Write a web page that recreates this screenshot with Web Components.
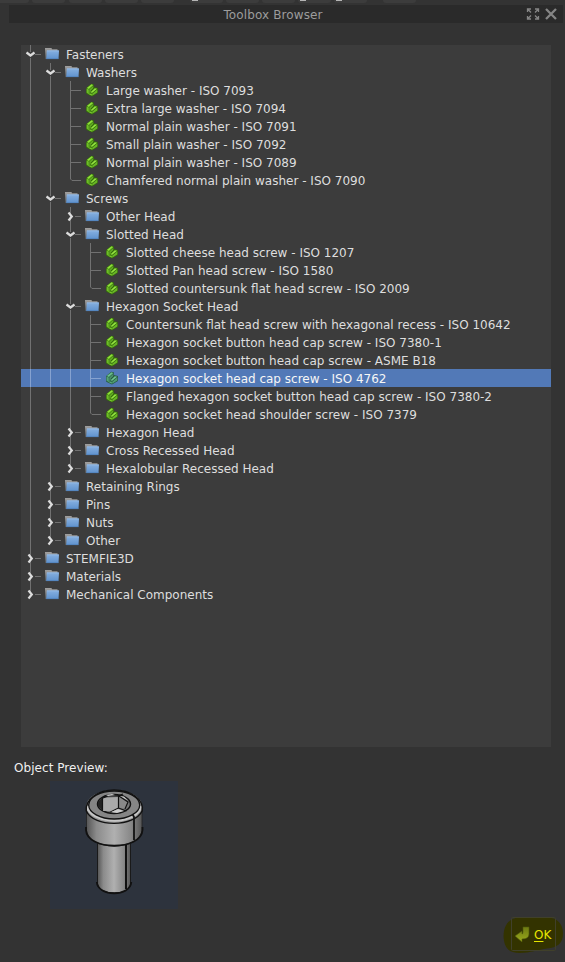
<!DOCTYPE html>
<html lang="en"><head><meta charset="utf-8"><title>Toolbox Browser</title>
<style>html,body{margin:0;background:#333}body{width:565px;height:962px;overflow:hidden}</style></head>
<body>
<toolbox-dialog></toolbox-dialog>
<script>
const mk=(name,html,init)=>{
  const t=document.createElement('template');t.innerHTML=html;
  customElements.define(name,class extends HTMLElement{
    constructor(){super();this.attachShadow({mode:'open'}).append(t.content.cloneNode(true));}
    connectedCallback(){if(init&&!this.ready){this.ready=true;init(this,this.shadowRoot);}}
  });
};
mk('toolbar-edge',`<style>:host{display:block;height:5px;overflow:hidden}svg{display:block}</style>
<svg width="565" height="5"><g fill="#3c3c3c"><rect x="-6" y="-8" width="35" height="11" rx="3"/><rect x="32" y="-8" width="33" height="11" rx="3"/><rect x="69" y="-8" width="33" height="11" rx="3"/><rect x="105" y="-8" width="33" height="11" rx="3"/><rect x="141" y="-8" width="33" height="11" rx="3"/><rect x="190" y="-8" width="33" height="11" rx="3"/><rect x="226" y="-8" width="33" height="11" rx="3"/><rect x="262" y="-8" width="33" height="11" rx="3"/><rect x="298" y="-8" width="33" height="11" rx="3"/><rect x="334" y="-8" width="33" height="11" rx="3"/><rect x="383" y="-8" width="33" height="11" rx="3"/></g><path d="M192 0h6v1h-6zM300 0h6v1h-6zM336 0h6v1h-6z" fill="#b5b5b5"/></svg>`);
mk('title-bar',`<style>:host{display:flex;align-items:center;height:18px;margin:0 2px 0 9px;background:#2a2a2a;color:#9c9c9c}
span{flex:1;text-align:center;padding:2px 0 0 11px;white-space:nowrap;letter-spacing:.12px}svg{margin-right:6px;flex:none}</style>
<span><slot></slot></span>
<svg width="31" height="14" fill="none" stroke="#858585"><path d="M1.500 5.500v-3H5M2 3l3 3M9 2.500h3.500v3M12 3L9 6M1.500 9.500v3H5M2 12l3-3M9 12.500h3.500v-3M12 12L9 9" stroke-width="1.300" transform="translate(0 -.5)"/><path d="M20 2l10 10M30 2L20 12" stroke-width="2.300"/></svg>`);
mk('folder-icon',`<style>:host{display:block;width:15px;height:12px}svg{display:block}</style>
<svg width="15" height="12"><defs><linearGradient id="a" x2="0" y2="1"><stop stop-color="#86afe0"/><stop offset="1" stop-color="#5f92cd"/></linearGradient><linearGradient id="b" x2="0" y2="1"><stop stop-color="#a0a0a0"/><stop offset="1" stop-color="#686868"/></linearGradient></defs><path d="M0 0h6.500l.5 1.200h5.500V4H2l-.5 7H.5z" fill="url(#b)"/><path d="M1.800 2.500H14l-.5 8.500H1.200z" fill="url(#a)"/><path d="M2 2.900h11.800" stroke="#98bde8" stroke-width=".8"/><path d="M1.200 10.700h12.300" stroke="#4a7ab2" stroke-width=".6"/></svg>`);
mk('part-icon',`<style>:host{display:block;width:14px;height:14px}svg{display:block}</style>
<svg width="14" height="14"><g transform="translate(1 .7)"><path d="M5.200 0L7.800.6V3.200L11.900 4.200v5L6 12.700.2 10V4.200z" fill="#32680b"/><path d="M.8 4.300L5.400.6l1.900.6-4.400 4.100z" fill="#8cdd38"/><path d="M.6 4.800l2.200 1v3.900L.6 9z" fill="#6fbe28"/><path d="M3.300 5.800L7.300 2v2.300L4.600 7l.2 1.500-1.500 1z" fill="#62ac22"/><path d="M4.800 8.300l4-3.700 2.400.5-5.300 4.300z" fill="#94e43f"/><path d="M1 9.500l2.600.3 2.200.3v2z" fill="#7ccb2f"/><path d="M6.200 10l5.100-4.300v3L6.200 12z" fill="#69b526"/></g></svg>`);
mk('tree-row',`<style>:host{display:flex;height:18px;align-items:center;white-space:nowrap;color:#dedede;--line:#717171}
:host([selected]){background:#5279b7;color:#f6f6f6;--line:#86a2d0}
.g{width:20px;height:18px;flex:none}.g svg{display:block}.i{width:21px;padding-left:4px;flex:none;display:flex}
:host([selected]) part-icon{filter:hue-rotate(45deg) saturate(.55) brightness(.88)}
.t{padding-top:2px}</style><span class="t"><slot></slot></span>`,(el,r)=>{
  const g=el.getAttribute('guides'),k=el.getAttribute('kind'),t=r.querySelector('.t');
  const shape={
   '|':'<path d="M9.500 0v18"/>',
   't':'<path d="M9.500 0v18M10 9.500h10"/>','l':'<path d="M9.500 0v8l1.500 1.500H20"/>',
   'o':'<path d="M9.500 0v7M9.500 13v5M14 9.500h6"/>','c':'<path d="M9.500 0v18M14 9.500h6"/>','e':'<path d="M9.500 0v9M14 9.500h6"/>'};
  for(const c of g){const d=document.createElement('span');d.className='g';
   let s=shape[c];if(c==='o')s+='<path d="M5.500 7.500l4 3 4-3" stroke="#dcdcdc" stroke-width="2.200"/>';
   if(c==='c'||c==='e')s+='<path d="M7.500 5.500l3.300 4-3.300 4" stroke="#dcdcdc" stroke-width="2.200"/>';
   d.innerHTML='<svg width="20" height="18" fill="none" stroke="var(--line)">'+s+'</svg>';r.insertBefore(d,t);}
  const i=document.createElement('span');i.className='i';i.append(document.createElement(k==='folder'?'folder-icon':'part-icon'));r.insertBefore(i,t);
});
mk('tree-view',`<style>:host{display:block;background:#3c3c3c;height:702px;margin:22px 14px 0 21px}</style><slot></slot>`);
mk('object-preview',`<style>:host{display:block;color:#efefef}.l{margin:12px 0 0 14px;height:18px;line-height:18px;letter-spacing:.05px}.b{margin:4px 0 0 50px;width:128px;height:128px;background:#2d333d}svg{display:block}</style>
<div class="l"><slot></slot></div><div class="b"><svg width="128" height="128" viewBox="50 781 128 128"><defs>
<linearGradient id="h"><stop stop-color="#555"/><stop offset=".18" stop-color="#8b8b8b"/><stop offset=".5" stop-color="#b0b0b0"/><stop offset=".8" stop-color="#888"/><stop offset="1" stop-color="#555"/></linearGradient></defs>
<path d="M97.500 840v44c1 12 33 12 33 0v-44z" fill="url(#h)" stroke="#1a1a1a"/><path d="M126 844v45" stroke="#111" stroke-width="2"/><path d="M96.800 882c1 15 33.500 15 34.500 0" fill="none" stroke="#111" stroke-width="1.800"/>
<path d="M86.500 806v25c3 20 52 20 55.500 0v-25z" fill="url(#h)" stroke="#222" stroke-width=".8"/><path d="M86 827v3c1 21 55.500 21 56.500 0v-3" fill="none" stroke="#111" stroke-width="1.800"/>
<ellipse cx="114.200" cy="806.500" rx="28" ry="16.500" fill="#979797"/><path d="M87 810c8 14 44 17 54 0v-4H87z" fill="#c6c6c6"/><path d="M86.200 811c-1-12 12-21 28-21s30 9 28 21c-8 16-48 17-56 0" fill="none" stroke="#111" stroke-width="1.400"/><ellipse cx="114.200" cy="805" rx="25.500" ry="14" fill="#858585" stroke="#111" stroke-width="1.300"/>
<ellipse cx="114" cy="804" rx="16.500" ry="9.500" fill="#777" stroke="#111" stroke-width="1.500"/><path d="M98 802l4-4v12l-4-4z" fill="#222"/><path d="M103 798l15-1v12l-5 2h-10z" fill="#aaa"/><path d="M119 797l9 5-2 6-7 1z" fill="#888"/><path d="M118.500 796v12l-8 4m8-4l8 3M103 798l5-2h10l5-2M119 796l9 6-3 7M102.500 798v13" fill="none" stroke="#111" stroke-width="1.200"/><path d="M111 812l7-3 6 2-7 2zM106 795l6-1 3 1-7 1zM120 796l4 .5 4 4z" fill="#ccc"/><path d="M132.500 814l1.500 3v23" fill="none" stroke="#111" stroke-width="1.800"/></svg></div>`);
mk('ok-button',`<style>:host{position:absolute;left:503px;top:916px;width:62px;height:40px;display:block;color:#e6e600}
svg{position:absolute;left:0;top:0}.k{position:absolute;left:31px;top:10px;line-height:18px}u{text-decoration-thickness:1px;text-underline-offset:2px}</style>
<svg width="62" height="40"><defs><linearGradient id="v" x2="0" y2="1"><stop stop-color="#6d7a12"/><stop offset="1" stop-color="#9aaa1c"/></linearGradient></defs><path d="M.5 20C1 8 7 2 16 1.500h28c11 0 16 7 16 16 0 10-6 14-16 15-9 1-17 4.500-27 4.500C5 37 1 31 .5 20z" fill="#333300"/><rect x="8.500" y="1.500" width="44" height="33" rx="1" fill="none" stroke="#40402a"/><path d="M20 11h6v7q0 5-7 5v3l-7-6 7-5v3q1 0 1-2z" fill="url(#v)" stroke="#4f590c" stroke-width=".6"/></svg><span class="k"><u>O</u>K</span>`);
mk('toolbox-dialog',`<style>:host{display:block;position:relative;width:565px;height:962px;background:#333;font:12px/18px "DejaVu Sans",sans-serif}</style>
<toolbar-edge></toolbar-edge><title-bar>Toolbox Browser</title-bar><tree-view></tree-view><object-preview>Object Preview:</object-preview><ok-button></ok-button>`,(el,r)=>{
 const rows=`o Fasteners
|o Washers
||t Large washer - ISO 7093
||t Extra large washer - ISO 7094
||t Normal plain washer - ISO 7091
||t Small plain washer - ISO 7092
||t Normal plain washer - ISO 7089
||l Chamfered normal plain washer - ISO 7090
|o Screws
||c Other Head
||o Slotted Head
|||t Slotted cheese head screw - ISO 1207
|||t Slotted Pan head screw - ISO 1580
|||l Slotted countersunk flat head screw - ISO 2009
||o Hexagon Socket Head
|||t Countersunk flat head screw with hexagonal recess - ISO 10642
|||t Hexagon socket button head cap screw - ISO 7380-1
|||t Hexagon socket button head cap screw - ASME B18
|||t Hexagon socket head cap screw - ISO 4762
|||t Flanged hexagon socket button head cap screw - ISO 7380-2
|||l Hexagon socket head shoulder screw - ISO 7379
||c Hexagon Head
||c Cross Recessed Head
||e Hexalobular Recessed Head
|c Retaining Rings
|c Pins
|c Nuts
|e Other
c STEMFIE3D
c Materials
e Mechanical Components`.split('\n');
 const tv=r.querySelector('tree-view');
 rows.forEach((s,n)=>{const i=s.indexOf(' '),g=s.slice(0,i),e=document.createElement('tree-row');e.setAttribute('guides',g);e.setAttribute('kind',/[tl]$/.test(g)?'part':'folder');if(n===18)e.setAttribute('selected','');e.textContent=s.slice(i+1);tv.append(e);});
});
</script></body></html>
